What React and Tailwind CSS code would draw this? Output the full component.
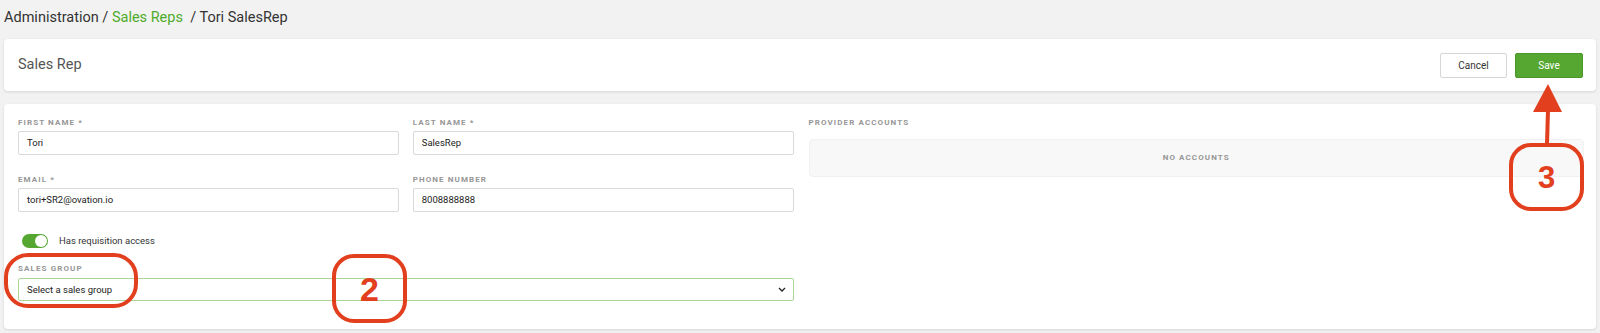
import React from "react";

const labelCls = "block text-[8px] leading-[10px] font-bold tracking-[1.1px] text-[#969696] uppercase";
const inputCls = "w-full h-6 border border-[#d9d9d9] rounded-[2px] px-2 text-[9.5px] text-[#222] flex items-center bg-white";

function Field({ label, value }) {
  return (
    <div>
      <div className={`${labelCls} mb-[3px]`}>{label}</div>
      <div className={inputCls}>{value}</div>
    </div>
  );
}

function Annotations() {
  return (
    <>
      <div className="absolute left-[4px] top-[253px] w-[134px] h-[55px] rounded-[24px] border-[4px] border-[#e13f1e]" />
      <div className="absolute left-[332px] top-[254px] w-[75px] h-[69px] rounded-[22px] border-[4px] border-[#e13f1e] flex items-center justify-center">
        <span className="text-[34px] leading-none font-bold text-[#e13f1e] font-['Liberation_Sans',sans-serif]">2</span>
      </div>
      <div className="absolute left-[1509px] top-[143px] w-[75px] h-[68px] rounded-[22px] border-[4px] border-[#e13f1e] flex items-center justify-center">
        <span className="text-[31px] leading-none font-bold text-[#e13f1e] font-['Liberation_Sans',sans-serif]">3</span>
      </div>
      <svg className="absolute left-[1528px] top-[80px]" width="40" height="66" viewBox="0 0 40 66">
        <line x1="20" y1="30" x2="19" y2="64" stroke="#e13f1e" strokeWidth="4" />
        <polygon points="20,4 5,32 34,32" fill="#e13f1e" />
      </svg>
    </>
  );
}

export default function App() {
  return (
    <div className="relative w-[1600px] h-[333px] bg-[#f2f2f2] font-['Roboto',sans-serif] overflow-hidden">
      <div className="px-1 pt-[8px] pb-[11px] text-[14.5px] leading-[20px] text-[#333]">
        Administration / <span className="text-[#4fab2b]">Sales Reps</span>&nbsp;&nbsp;/ Tori SalesRep
      </div>

      <div className="mx-1 h-[52px] bg-white rounded-[4px] shadow-[0_1px_3px_rgba(0,0,0,0.12)] flex items-center justify-between pl-[14px] pr-[13px]">
        <div className="text-[14.5px] text-[#555]">Sales Rep</div>
        <div className="flex gap-2">
          <button className="w-[67px] h-[25px] border border-[#d6d6d6] rounded-[2px] bg-white text-[10px] text-[#333]">Cancel</button>
          <button className="w-[68px] h-[25px] border border-[#4a9628] rounded-[2px] bg-[#56a732] text-[10px] text-white">Save</button>
        </div>
      </div>

      <div className="mx-1 mt-[13px] bg-white rounded-[4px] shadow-[0_1px_3px_rgba(0,0,0,0.12)] pl-[14px] pr-[12px] pt-[14px] pb-[28px] grid grid-cols-2 gap-x-[15px]">
        <div>
          <div className="grid grid-cols-2 gap-x-[14px] gap-y-[20px]">
            <Field label="First Name *" value="Tori" />
            <Field label="Last Name *" value="SalesRep" />
            <Field label="Email *" value="tori+SR2@ovation.io" />
            <Field label="Phone Number" value="8008888888" />
          </div>
          <div className="mt-[22px] ml-[4px] flex items-center gap-[11px]">
            <div className="w-[26px] h-[14px] rounded-full bg-[#56a732] flex items-center justify-end pr-[1px]">
              <div className="w-[12px] h-[12px] rounded-full bg-white" />
            </div>
            <span className="text-[9.5px] text-[#333]">Has requisition access</span>
          </div>
          <div className="mt-[16px]">
            <div className={`${labelCls} mb-[4px]`}>Sales Group</div>
            <div className="w-full h-[23px] border border-[#a9d695] rounded-[2px] px-2 text-[9.5px] text-[#222] flex items-center justify-between">
              <span>Select a sales group</span>
              <svg width="8" height="5" viewBox="0 0 8 5" className="mr-[-1px]">
                <path d="M1 1 L4 4 L7 1" fill="none" stroke="#222" strokeWidth="1.3" />
              </svg>
            </div>
          </div>
        </div>
        <div>
          <div className={`${labelCls} mb-[11px]`}>Provider Accounts</div>
          <div className="h-[38px] rounded-[4px] bg-[#f8f8f8] border border-[#f1f1f1] flex items-center justify-center">
            <span className="text-[8px] font-bold tracking-[1.1px] text-[#969696]">NO ACCOUNTS</span>
          </div>
        </div>
      </div>

      <Annotations />
    </div>
  );
}
